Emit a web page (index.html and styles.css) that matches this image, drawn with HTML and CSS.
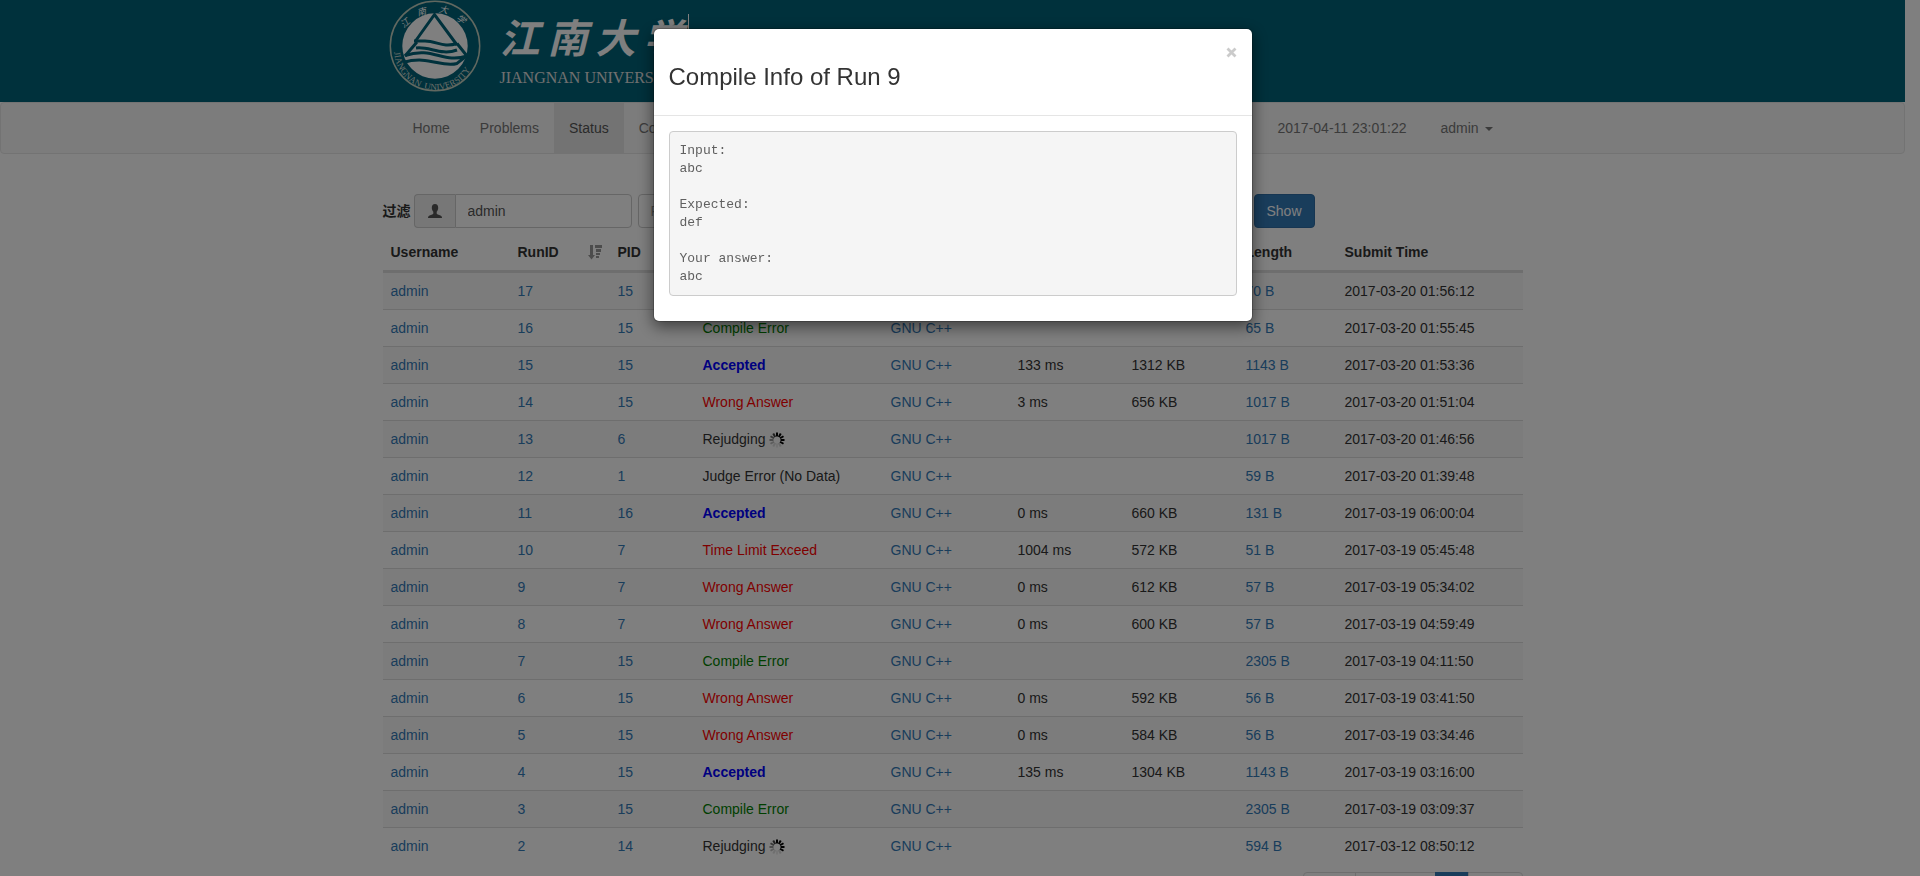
FILE: index.html
```html
<!DOCTYPE html>
<html lang="en">
<head>
<meta charset="utf-8">
<title>Status - Jiangnan University Online Judge</title>
<link rel="stylesheet" href="styles.css">
</head>
<body>
<header class="banner">
  <div class="container brand">
    <svg class="seal" viewBox="0 0 92 92" aria-hidden="true">
      <defs>
        <path id="arc-bottom" d="M5 49A41 41 0 0 0 87 49"/>
      </defs>
      <circle cx="46" cy="46" r="44.700" fill="none" stroke="#c2d0c0" stroke-width="1.500"/>
      <circle cx="46" cy="46" r="32.700" fill="#fff"/>
      <g fill="none" stroke="#006278" stroke-width="3">
        <path d="M26.500 41L45.500 14.500L68 45"/>
        <path d="M25 41H36C48 41 54 48 68 43.500"/>
        <path d="M27 48C40 46 52 56 68 50"/>
        <path d="M16 55.500C44 46 54 64 78 56L68 43.500"/>
        <path d="M28 42L16 56"/>
        <path d="M14 62.500C40 55 52 68 68 63.500L80 54"/>
      </g>
      <text class="seal-latin"><textPath href="#arc-bottom" startOffset="3">JIANGNAN&#160; UNIVERSITY</textPath></text>
      <g class="seal-han">
        <text x="11" y="26" transform="rotate(-40 16 22)">江</text>
        <text x="28" y="15" transform="rotate(-14 33 11)">南</text>
        <text x="50" y="13" transform="rotate(10 55 9)">大</text>
        <text x="68" y="23" transform="rotate(38 73 19)">学</text>
      </g>
    </svg>
    <div class="wordmark">
      <div class="wordmark-han"><span>江</span><span>南</span><span>大</span><span>学</span></div>
      <div class="wordmark-latin">JIANGNAN UNIVERSITY</div>
    </div>
    <div class="brand-rule"></div>
  </div>
</header>

<nav class="navbar">
  <div class="container navbar-inner">
    <ul class="nav">
      <li><a href="#">Home</a></li>
      <li><a href="#">Problems</a></li>
      <li class="active"><a href="#">Status</a></li>
      <li><a href="#">Contest</a></li>
    </ul>
    <ul class="nav nav-right">
      <li><span class="clock">2017-04-11 23:01:22</span></li>
      <li><a href="#">admin <span class="caret"></span></a></li>
    </ul>
  </div>
</nav>

<main class="container">
  <form class="filter">
    <label for="user">过滤</label>
    <div class="input-group">
      <span class="addon">
        <svg width="14" height="14" viewBox="0 0 14 14" aria-hidden="true"><path fill="#555" d="M7 0C4.800 0 3.800 1.600 3.800 3.800C3.800 5.500 4.500 7 5.300 7.800V9.200C5.300 9.800 4.800 10.100 4.200 10.400L1.500 11.600C.500 12.100 0 12.700 0 14H14C14 12.700 13.500 12.100 12.500 11.600L9.800 10.400C9.200 10.100 8.700 9.800 8.700 9.200V7.800C9.500 7 10.200 5.500 10.200 3.800C10.200 1.600 9.200 0 7 0Z"/></svg>
      </span>
      <input id="user" class="control" type="text" value="admin">
    </div>
    <input class="control problem" type="text" placeholder="Problem ID" aria-label="Problem ID">
    <select class="control" aria-label="Result"><option>All Results</option></select>
    <select class="control" aria-label="Language"><option>All Languages</option></select>
    <button class="show" type="button">Show</button>
  </form>

  <table class="runs">
    <colgroup>
      <col class="c-user"><col class="c-run"><col class="c-pid"><col class="c-result"><col class="c-lang"><col class="c-time"><col class="c-mem"><col class="c-len"><col>
    </colgroup>
    <thead>
      <tr>
        <th>Username</th>
        <th><div class="sorted">RunID
          <svg width="14" height="16" viewBox="0 0 14 16" aria-hidden="true"><path fill="#999" d="M2 1H5V11H7L3.500 15.500L0 11H2ZM7 1H14V4H7ZM8 5H13V8H8ZM8 9H12V11H8ZM8 12H11V14H8Z"/></svg></div></th>
        <th>PID</th><th>Result</th><th>Language</th><th>Time</th><th>Memory</th><th>Length</th><th>Submit Time</th>
      </tr>
    </thead>
    <tbody id="rows"></tbody>
  </table>

  <ul class="pagination">
    <li><a href="#">First</a></li><li><a href="#">Previous</a></li><li class="current"><a href="#">1</a></li><li><a href="#">Next</a></li>
  </ul>
</main>

<div class="backdrop"></div>
<div class="modal" role="dialog" aria-labelledby="modal-title">
  <div class="modal-header">
    <button class="close" type="button" aria-label="Close"><svg width="11" height="11" viewBox="0 0 11 11" aria-hidden="true"><path d="M1.500 1.500L9.500 9.500M9.500 1.500L1.500 9.500" stroke="#000" stroke-width="2.800"/></svg></button>
    <h3 id="modal-title">Compile Info of Run 9</h3>
  </div>
  <div class="modal-body">
<pre>Input:
abc

Expected:
def

Your answer:
abc</pre>
  </div>
</div>
<script src="app.js"></script>
</body>
</html>
```
FILE: styles.css
```css
* { box-sizing: border-box; }
html { height: 100%; }
body {
  margin: 0;
  height: 100%;
  overflow: hidden;
  padding-right: 15px;
  background: #fff;
  color: #333;
  font: 14px/20px "Liberation Sans", "Noto Sans CJK SC", sans-serif;
}
a { color: #337ab7; text-decoration: none; }
ul { list-style: none; margin: 0; padding: 0; }
.container { max-width: 1170px; margin: 0 auto; padding: 0 15px; }

.banner { height: 102px; background: #006278; }
.brand { display: flex; align-items: flex-start; }
.seal { width: 92px; height: 92px; margin-left: 6px; }
.seal-latin { fill: #d4ddd4; font: 9px "Liberation Serif", serif; }
.seal-han { fill: #fff; font: italic 9px "Noto Sans CJK SC", sans-serif; }
.wordmark { margin-left: 19px; padding-top: 8px; color: #fff; }
.wordmark-han { display: flex; gap: 8px; font: italic 700 40px/56px "Noto Sans CJK SC", sans-serif; }
.wordmark-latin { font: 16px/24px "Liberation Serif", serif; padding-top: 2px; color: #e0e0e0; white-space: nowrap; }
.brand-rule { width: 1px; height: 70px; margin: 14px 0 0 4px; background: #fff; }

.navbar { border: 1px solid #e7e7e7; border-radius: 4px; background: #f8f8f8; margin-bottom: 40px; }
.navbar-inner { display: flex; justify-content: space-between; padding: 0 30px; }
.nav { display: flex; }
.nav-right { gap: 4px; }
.nav a, .clock { display: block; padding: 15px; color: #777; }
.nav .active a { background: #e7e7e7; color: #555; }
.caret {
  display: inline-block;
  margin-left: 2px;
  vertical-align: middle;
  border-top: 4px solid;
  border-left: 4px solid transparent;
  border-right: 4px solid transparent;
}

.filter { display: flex; align-items: center; gap: 6px; }
.filter label { font-weight: 700; margin-right: -3px; }
.input-group { display: flex; width: 218px; }
.addon {
  display: flex;
  align-items: center;
  padding: 0 13px;
  border: 1px solid #ccc;
  border-right: 0;
  border-radius: 4px 0 0 4px;
  background: #eee;
}
.control {
  height: 34px;
  min-width: 0;
  padding: 6px 12px;
  border: 1px solid #ccc;
  border-radius: 4px;
  background: #fff;
  color: #555;
  font: inherit;
}
.control::placeholder { color: #999; }
.input-group .control { flex: 1; border-radius: 0 4px 4px 0; }
.problem { width: 178px; }
select.control { width: 210px; }
.show {
  height: 34px;
  padding: 6px 12px;
  border: 1px solid #2e6da4;
  border-radius: 4px;
  background: #337ab7;
  color: #fff;
  font: inherit;
}

.runs { width: 100%; table-layout: fixed; border-collapse: separate; border-spacing: 0; margin-top: 6px; }
.runs th, .runs td { padding: 8px; text-align: left; white-space: nowrap; }
.runs th { border-bottom: 2px solid #ddd; }
.runs td { border-top: 1px solid #ddd; }
.runs tbody tr:nth-child(odd) { background: #f9f9f9; }
.c-user { width: 127px; }
.c-run { width: 100px; }
.c-pid { width: 85px; }
.c-result { width: 188px; }
.c-lang { width: 127px; }
.c-time, .c-mem { width: 114px; }
.c-len { width: 99px; }
.sorted { display: flex; align-items: center; justify-content: space-between; }
.accepted { color: #00f; font-weight: 700; }
.wrong { color: #f00; }
.compile { color: green; }
.spinner { vertical-align: -4px; }

.pagination { display: flex; justify-content: flex-end; margin-top: 8px; }
.pagination a { display: block; padding: 6px 12px; margin-left: -1px; border: 1px solid #ddd; }
.pagination li:first-child a { border-radius: 4px 0 0 4px; }
.pagination li:last-child a { border-radius: 0 4px 4px 0; }
.pagination .current a { background: #337ab7; border-color: #337ab7; color: #fff; }

.backdrop { position: fixed; inset: 0; background: rgba(0, 0, 0, .5); }
.modal {
  position: fixed;
  top: 28px;
  left: 0;
  right: 15px;
  width: 600px;
  margin: 0 auto;
  border: 1px solid rgba(0, 0, 0, .2);
  border-radius: 6px;
  background: #fff;
  background-clip: padding-box;
  box-shadow: 0 5px 15px rgba(0, 0, 0, .5);
}
.modal-header { padding: 15px; border-bottom: 1px solid #e5e5e5; }
.modal-header h3 { margin: 20px 0 10px; font-size: 24px; line-height: 26px; font-weight: 500; }
.close {
  float: right;
  display: flex;
  margin-top: 3px;
  padding: 0;
  border: 0;
  background: none;
  opacity: .2;
}
.modal-body { padding: 15px; }
pre {
  margin: 0 0 10px;
  padding: 10px 10px 9px;
  border: 1px solid #ccc;
  border-radius: 4px;
  background: #f5f5f5;
  color: #606060;
  font: 13px/18px "Courier New", "Liberation Mono", monospace;
}
```
FILE: app.js
```js
const runs = [
  [17, 15, "Compile Error", "", "", "70 B", "2017-03-20 01:56:12"],
  [16, 15, "Compile Error", "", "", "65 B", "2017-03-20 01:55:45"],
  [15, 15, "Accepted", "133 ms", "1312 KB", "1143 B", "2017-03-20 01:53:36"],
  [14, 15, "Wrong Answer", "3 ms", "656 KB", "1017 B", "2017-03-20 01:51:04"],
  [13, 6, "Rejudging", "", "", "1017 B", "2017-03-20 01:46:56"],
  [12, 1, "Judge Error (No Data)", "", "", "59 B", "2017-03-20 01:39:48"],
  [11, 16, "Accepted", "0 ms", "660 KB", "131 B", "2017-03-19 06:00:04"],
  [10, 7, "Time Limit Exceed", "1004 ms", "572 KB", "51 B", "2017-03-19 05:45:48"],
  [9, 7, "Wrong Answer", "0 ms", "612 KB", "57 B", "2017-03-19 05:34:02"],
  [8, 7, "Wrong Answer", "0 ms", "600 KB", "57 B", "2017-03-19 04:59:49"],
  [7, 15, "Compile Error", "", "", "2305 B", "2017-03-19 04:11:50"],
  [6, 15, "Wrong Answer", "0 ms", "592 KB", "56 B", "2017-03-19 03:41:50"],
  [5, 15, "Wrong Answer", "0 ms", "584 KB", "56 B", "2017-03-19 03:34:46"],
  [4, 15, "Accepted", "135 ms", "1304 KB", "1143 B", "2017-03-19 03:16:00"],
  [3, 15, "Compile Error", "", "", "2305 B", "2017-03-19 03:09:37"],
  [2, 14, "Rejudging", "", "", "594 B", "2017-03-12 08:50:12"]
];
const classes = {
  "Accepted": "accepted",
  "Wrong Answer": "wrong",
  "Time Limit Exceed": "wrong",
  "Compile Error": "compile"
};

// Twelve spokes that fade clockwise.
const opacity = [1, 1, 1, 1, 1, 0.15, 0.08, 0.12, 0.25, 0.4, 0.55, 0.75];
const spokes = opacity.map((o, i) =>
  `<path d="M8 0.500V4.500" stroke="#000" stroke-width="2" opacity="${o}" transform="rotate(${i * 30} 8 8)"/>`).join("");
const spinner = `<svg class="spinner" width="16" height="16" viewBox="0 0 16 16" aria-hidden="true">${spokes}</svg>`;

const link = text => `<a href="#">${text}</a>`;
document.getElementById("rows").innerHTML = runs.map(([id, pid, result, time, memory, length, date]) =>
  `<tr><td>${link("admin")}</td><td>${link(id)}</td><td>${link(pid)}</td>` +
  `<td><span class="${classes[result] || "plain"}">${result}</span>${result === "Rejudging" ? " " + spinner : ""}</td>` +
  `<td>${link("GNU C++")}</td><td>${time}</td><td>${memory}</td><td>${link(length)}</td><td>${date}</td></tr>`).join("");
```
